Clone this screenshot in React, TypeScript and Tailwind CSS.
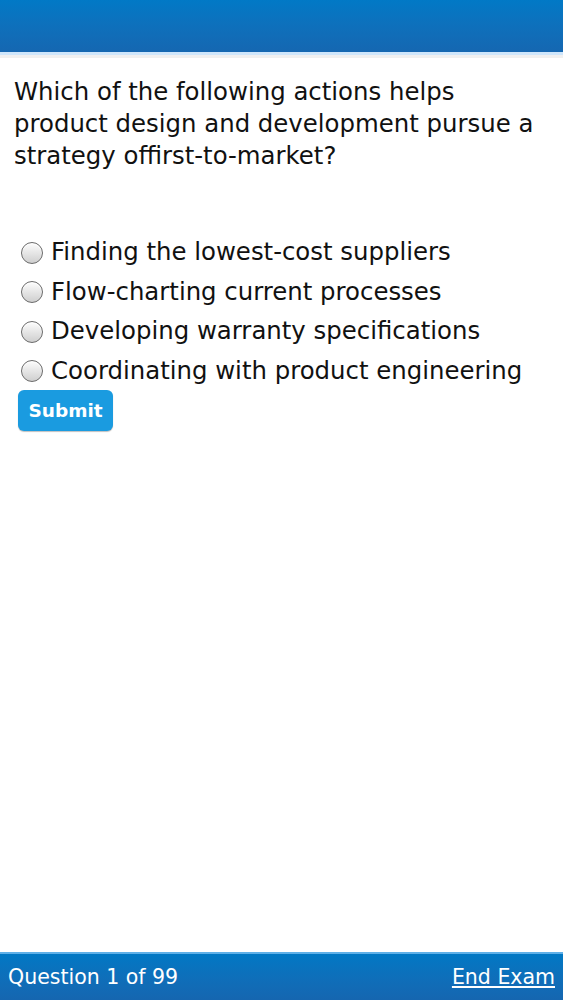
import { useState } from 'react'

const options = [
  'Finding the lowest-cost suppliers',
  'Flow-charting current processes',
  'Developing warranty specifications',
  'Coordinating with product engineering',
]

function Radio({ checked }: { checked: boolean }) {
  return (
    <span className="relative inline-block h-[22px] w-[22px] shrink-0 rounded-full border border-[#6b6b6b] bg-gradient-to-b from-[#fdfdfd] to-[#cfcfcf] shadow-[inset_0_1px_1px_rgba(255,255,255,0.9)]">
      {checked && <span className="absolute left-[6px] top-[6px] h-[8px] w-[8px] rounded-full bg-[#333]" />}
    </span>
  )
}

export default function App() {
  const [picked, setPicked] = useState<number | null>(null)

  return (
    <div className="flex h-[1000px] flex-col bg-white font-['DejaVu_Sans',Verdana,sans-serif] text-[#111]">
      <header className="h-[52px] shrink-0 bg-gradient-to-b from-[#0179c6] to-[#1567b1]" />
      <div className="h-[3px] shrink-0 bg-[#cfe6fb]" />
      <div className="h-[3px] shrink-0 bg-[#f0f0f0]" />

      <main className="flex-1 px-[14px] pt-[18px]">
        <p className="text-[24.4px] leading-[32px]">
          Which of the following actions helps product design and development pursue a strategy offirst-to-market?
        </p>

        <ul className="mt-[66px] flex flex-col gap-[10px] pl-[7px]">
          {options.map((o, i) => (
            <li
              key={o}
              className="flex h-[29.5px] cursor-pointer items-center gap-[8px] text-[24.4px]"
              onClick={() => setPicked(i)}
            >
              <Radio checked={picked === i} />
              <span>{o}</span>
            </li>
          ))}
        </ul>

        <button className="ml-[4px] mt-[4px] h-[41px] w-[95px] rounded-[6px] bg-[#1a9be0] text-[18.5px] font-bold text-white shadow-[0_1px_1px_rgba(0,0,0,0.25)]">
          Submit
        </button>
      </main>

      <footer className="flex h-[48px] shrink-0 items-center justify-between border-t-2 border-[#5fb0e8] bg-gradient-to-b from-[#0178c4] to-[#1566b0] px-[8px] text-[20.5px] text-white">
        <span>Question 1 of 99</span>
        <a href="#" className="underline underline-offset-2">End Exam</a>
      </footer>
    </div>
  )
}
